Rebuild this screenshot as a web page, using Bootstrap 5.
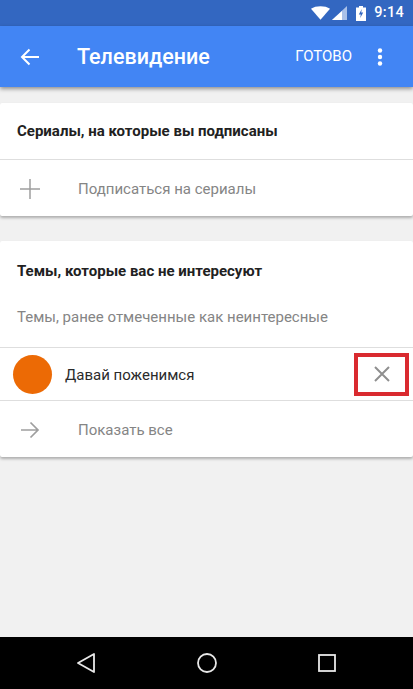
<!DOCTYPE html>
<html lang="ru">
  <head>
    <meta charset="UTF-8" />
    <meta name="viewport" content="width=device-width, initial-scale=1.0" />
    <title>Телевидение</title>
    <link
      href="https://cdn.jsdelivr.net/npm/bootstrap@5.3.0/dist/css/bootstrap.min.css"
      rel="stylesheet"
    />
    <style>
      html, body { height: 100%; }
      body { font-family: Roboto, "Liberation Sans", sans-serif; background: #f1f1f1; overflow: hidden; }
      .screen { height: 689px; }
      .status-strip { height: 26px; background: #3367c1; color: #fff; font-size: 14.5px; font-weight: 500; padding-right: 9px; }
      .status-signal { margin-left: 2px; }
      .status-battery { margin-left: 9px; }
      .status-time { margin-left: 8px; letter-spacing: .3px; }
      .app-bar { height: 61px; background: #4285f4; color: #fff; box-shadow: 0 2px 4px rgba(0,0,0,.4); position: relative; padding-left: 20px; padding-right: 30px; }
      .app-title { font-size: 21.5px; font-weight: 500; margin-left: 37px; padding-top: 2px; }
      .app-done { font-size: 15px; margin-right: 25px; }
      .content-area { padding-top: 16px; }
      .tv-card { background: #fff; border-radius: 2px; box-shadow: 0 2px 3px rgba(0,0,0,.28); }
      .tv-card + .tv-card { margin-top: 25px; }
      .card-head { height: 57px; padding-left: 17px; font-size: 15px; font-weight: 700; color: #212121; border-bottom: 1px solid #dedede; }
      .card-head-plain { height: 60px; padding-left: 17px; font-size: 15px; font-weight: 700; color: #212121; }
      .card-note { height: 47px; padding-left: 17px; padding-bottom: 13px; font-size: 15px; color: #858585; border-bottom: 1px solid #dedede; }
      .action-row { height: 56px; padding-left: 20px; padding-top: 2px; font-size: 15px; color: #858585; }
      .action-icon { width: 20px; height: 20px; margin-right: 38px; }
      .topic-row { height: 53px; padding-left: 13px; padding-right: 4px; font-size: 15px; color: #2b2b2b; border-bottom: 1px solid #dedede; }
      .topic-dot { width: 39px; height: 39px; border-radius: 50%; background: #ec6a05; margin-right: 13px; }
      .topic-name { padding-top: 2px; }
      .close-box { width: 55px; height: 43px; border: 4px solid #d92a2f; }
      .system-bar { height: 52px; background: #000; margin-top: auto; padding-left: 77px; padding-right: 77px; }
    </style>
  </head>
  <body>
    <div class="screen d-flex flex-column">
      <!-- Status bar -->
      <div class="status-strip d-flex align-items-center justify-content-end">
        <svg width="19" height="14" viewBox="0 0 20 14"><path d="M0 2.500C5-1 15-1 20 2.500L10 14z" fill="#fff" /></svg>
        <svg class="status-signal" width="15" height="14" viewBox="0 0 15 14"><path d="M0 14 15 0v14z" fill="#a9c0e8" /><path d="M0 14 10 5v9z" fill="#fff" /></svg>
        <svg class="status-battery" width="10" height="15" viewBox="0 0 10 15"><path d="M3 0h4v1.500h3V15H0V1.500h3z" fill="#fff" /><path d="M5.800 3 2.800 8.500h2L4.200 12l3-5.500h-2z" fill="#3367c1" /></svg>
        <span class="status-time">9:14</span>
      </div>

      <!-- Toolbar -->
      <div class="app-bar d-flex align-items-center">
        <svg width="20" height="20" viewBox="0 0 20 20"><path d="M19 10H2M9.500 2.500 2 10l7.500 7.500" fill="none" stroke="#fff" stroke-width="2" /></svg>
        <span class="app-title flex-grow-1">Телевидение</span>
        <span class="app-done">ГОТОВО</span>
        <svg width="6" height="18" viewBox="0 0 6 18"><circle cx="3" cy="2.500" r="2.200" fill="#fff" /><circle cx="3" cy="9" r="2.200" fill="#fff" /><circle cx="3" cy="15.500" r="2.200" fill="#fff" /></svg>
      </div>

      <div class="content-area">
        <!-- Subscriptions -->
        <div class="tv-card">
          <div class="card-head d-flex align-items-center">Сериалы, на которые вы подписаны</div>
          <div class="action-row d-flex align-items-center">
            <svg class="action-icon" viewBox="0 0 20 20"><path d="M0 10h20M10 0v20" fill="none" stroke="#9e9e9e" stroke-width="1.500" /></svg>
            <span>Подписаться на сериалы</span>
          </div>
        </div>

        <!-- Not interested -->
        <div class="tv-card">
          <div class="card-head-plain d-flex align-items-center">Темы, которые вас не интересуют</div>
          <div class="card-note d-flex align-items-center">Темы, ранее отмеченные как неинтересные</div>
          <div class="topic-row d-flex align-items-center">
            <div class="topic-dot"></div>
            <span class="topic-name flex-grow-1">Давай поженимся</span>
            <div class="close-box d-flex align-items-center justify-content-center">
              <svg width="16" height="16" viewBox="0 0 16 16"><path d="M1 1l14 14M15 1 1 15" fill="none" stroke="#8f8f8f" stroke-width="2" /></svg>
            </div>
          </div>
          <div class="action-row d-flex align-items-center">
            <svg class="action-icon" viewBox="0 0 20 20"><path d="M1 10h17M10.500 2.500 18 10l-7.500 7.500" fill="none" stroke="#9e9e9e" stroke-width="1.700" /></svg>
            <span>Показать все</span>
          </div>
        </div>
      </div>

      <!-- Navigation bar -->
      <div class="system-bar d-flex align-items-center justify-content-between">
        <svg width="18" height="20" viewBox="0 0 18 20"><path d="M17 1v18L1 10z" fill="none" stroke="#e8e8e8" stroke-width="1.800" stroke-linejoin="round" /></svg>
        <svg width="20" height="20" viewBox="0 0 20 20"><circle cx="10" cy="10" r="9" fill="none" stroke="#e8e8e8" stroke-width="1.800" /></svg>
        <svg width="18" height="18" viewBox="0 0 18 18"><rect x="1" y="1" width="16" height="16" fill="none" stroke="#e8e8e8" stroke-width="1.800" /></svg>
      </div>
    </div>

    <script src="https://cdn.jsdelivr.net/npm/bootstrap@5.3.0/dist/js/bootstrap.bundle.min.js"></script>
  </body>
</html>
